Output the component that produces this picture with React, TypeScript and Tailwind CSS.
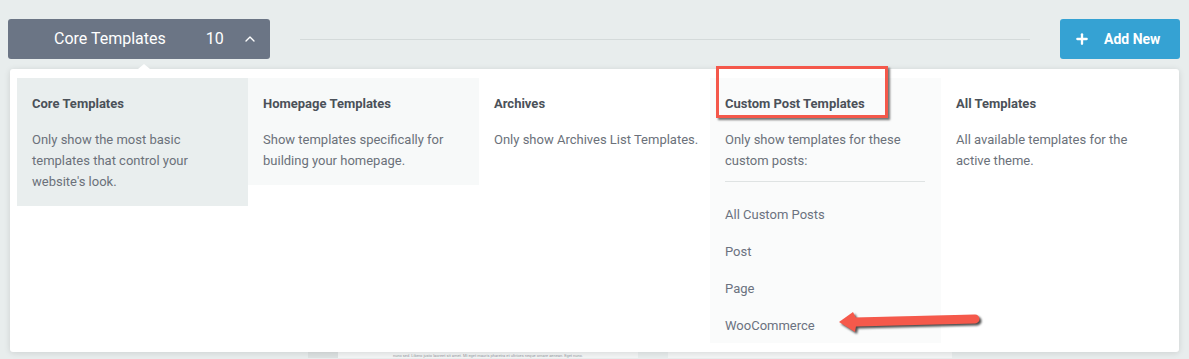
import React from 'react'
import { ChevronUp, Plus } from 'lucide-react'

const columns = [
  { title: 'Core Templates', desc: "Only show the most basic templates that control your website's look.", bg: 'bg-[#e9eeee]', h: 'h-[128px]', pr: 'pr-[15px]' },
  { title: 'Homepage Templates', desc: 'Show templates specifically for building your homepage.', bg: 'bg-[#f7f9f9]', h: 'h-[107px]', pr: 'pr-[15px]' },
  { title: 'Archives', desc: 'Only show Archives List Templates.', bg: 'bg-white', h: '', pr: 'pr-[4px]' },
]

const customPosts = ['All Custom Posts', 'Post', 'Page', 'WooCommerce']

const App = () => {
  return (
    <div className="relative h-[359px] w-[1189px] overflow-hidden bg-[#e8eded] font-['Roboto',sans-serif]">
      {/* top bar */}
      <div className="flex items-center pt-[19px] pl-2 pr-[9px]">
        <button className="flex h-10 w-[262px] items-center rounded-[3px] bg-[#6b7585] pl-[46px] text-white">
          <span className="text-[16px]">Core Templates</span>
          <span className="ml-10 text-[16px]">10</span>
          <ChevronUp className="ml-[18px] h-[16px] w-[16px]" strokeWidth={2} />
        </button>
        <div className="mx-[30px] h-px flex-1 bg-[#d4dada]" />
        <button className="flex h-10 w-[120px] items-center rounded-[3px] bg-[#35a2d3] pl-[14px] text-white">
          <Plus className="h-[16px] w-[16px]" strokeWidth={3.5} />
          <span className="ml-[14px] text-[14px] font-bold">Add New</span>
        </button>
      </div>

      {/* cards behind the dropdown */}
      <div className="mt-[21px] flex pl-[308px]">
        <div className="h-[278px] w-[330px] bg-[#dde2e2] pl-[30px]">
          <div className="flex h-full w-[300px] items-end justify-center bg-[#f3f5f5]">
            <span className="text-[4px] leading-[4px] text-[#9aa0a6]">nunc sed. Libero justo laoreet sit amet. Mi eget mauris pharetra et ultrices neque ornare aenean. Eget nunc.</span>
          </div>
        </div>
        <div className="ml-[30px] h-[278px] w-[284px] bg-[#f3f5f5]" />
      </div>

      {/* dropdown panel */}
      <div className="absolute left-[10px] top-[69px] h-[283px] w-[1169px] rounded-[3px] bg-white px-[7px] pt-[9px] shadow-[0_1px_6px_rgba(0,0,0,0.12)]">
        <div className="absolute -top-[5px] left-[128px] h-0 w-0 border-x-[6px] border-b-[5px] border-x-transparent border-b-white" />
        <div className="grid grid-cols-[231px_231px_231px_231px_231px]">
          {columns.map((c) => (
            <div key={c.title} className={`${c.bg} ${c.h} ${c.pr} pl-[15px] pt-[17px]`}>
              <div className="text-[13px] font-bold leading-[17px] text-[#4b5159]">{c.title}</div>
              <p className="mt-[17px] text-[13px] leading-[21px] text-[#6b717a]">{c.desc}</p>
            </div>
          ))}

          {/* custom post templates */}
          <div className="h-[265px] bg-[#fafbfb] px-[15px] pt-[17px]">
            <div className="text-[13px] font-bold leading-[17px] text-[#4b5159]">Custom Post Templates</div>
            <p className="mt-[17px] w-[200px] text-[13px] leading-[21px] text-[#6b717a]">Only show templates for these custom posts:</p>
            <div className="mt-[10px] h-px w-[200px] bg-[#dfe3e3]" />
            <ul className="mt-[24px] flex flex-col gap-[20px] text-[13px] leading-[17px] text-[#6b7280]">
              {customPosts.map((p) => (
                <li key={p}>{p}</li>
              ))}
            </ul>
          </div>

          <div className="px-[15px] pt-[17px]">
            <div className="text-[13px] font-bold leading-[17px] text-[#4b5159]">All Templates</div>
            <p className="mt-[17px] text-[13px] leading-[21px] text-[#6b717a]">All available templates for the active theme.</p>
          </div>
        </div>
      </div>

      {/* annotation: red box */}
      <div className="absolute left-[716px] top-[66px] h-[52px] w-[172px] border-[3px] border-[#f4584b] shadow-[2px_2px_2px_rgba(0,0,0,0.55)]" />

      {/* annotation: arrow */}
      <svg
        className="absolute left-[835px] top-[303px] drop-shadow-[2px_2px_1px_rgba(0,0,0,0.7)]"
        width="152"
        height="36"
        viewBox="0 0 152 36"
      >
        <line x1="20" y1="19" x2="140" y2="16" stroke="#f5594b" strokeWidth="9" strokeLinecap="round" />
        <polygon points="4,19 18,9 21,15 21,23 20,29" fill="#f5594b" />
      </svg>
    </div>
  )
}

export default App
